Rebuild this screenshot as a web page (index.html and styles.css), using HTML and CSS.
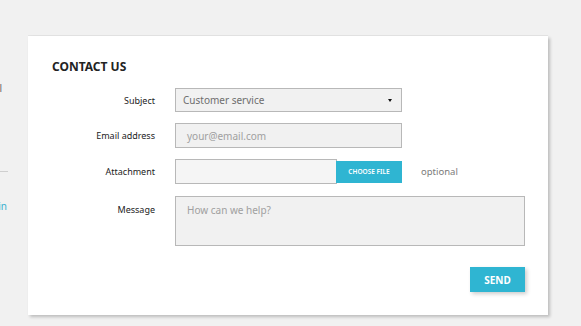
FILE: index.html
```html
<!DOCTYPE html>
<html>
<head>
<meta charset="utf-8">
<link rel="stylesheet" href="styles.css">
</head>
<body>
<div class="page">
  <aside class="sidebar">
    <div class="side-text">Terms and conditions of use, general</div>
    <div class="side-rule"></div>
    <div class="side-link">Sign in</div>
  </aside>
  <section class="card">
    <h3 class="title">CONTACT US</h3>
    <div class="row">
      <label class="label">Subject</label>
      <div class="select field"><span>Customer service</span><span class="caret"></span></div>
    </div>
    <div class="row">
      <label class="label">Email address</label>
      <div class="field email"><span class="ph">your@email.com</span></div>
    </div>
    <div class="row">
      <label class="label">Attachment</label>
      <div class="file-group">
        <div class="file-box"></div>
        <div class="file-btn">CHOOSE FILE</div>
      </div>
      <span class="optional">optional</span>
    </div>
    <div class="row row-msg">
      <label class="label label-top">Message</label>
      <div class="field textarea"><span class="ph">How can we help?</span></div>
    </div>
    <div class="actions">
      <button class="send">SEND</button>
    </div>
  </section>
</div>
</body>
</html>
```
FILE: styles.css
```css
html, body {
  margin: 0;
  padding: 0;
  background: #f1f1f1;
  font-family: "Noto Sans", "Open Sans", sans-serif;
}
.page {
  display: flex;
  align-items: flex-start;
  height: 326px;
  overflow: hidden;
}
.sidebar {
  width: 8px;
  flex: none;
  overflow: hidden;
  margin-right: 20px;
  display: flex;
  flex-direction: column;
  align-items: flex-end;
}
.side-text, .side-link {
  white-space: nowrap;
  font-size: 10px;
  line-height: 13px;
  flex: none;
}
.side-text {
  color: #666;
  margin-top: 82px;
  padding-right: 6px;
}
.side-rule {
  height: 1px;
  background: #cfcfcf;
  margin-top: 76px;
  width: 8px;
  flex: none;
}
.side-link {
  color: #3ab0cf;
  margin-top: 28px;
  padding-right: 1px;
}
.card {
  margin-top: 36px;
  width: 520px;
  height: 279px;
  flex: none;
  background: #fff;
  box-shadow: 2px 2px 3px 0 rgba(0,0,0,0.22), 0 -1px 0 rgba(0,0,0,0.05);
  box-sizing: border-box;
  padding-top: 22px;
}
.title {
  margin: 0 0 12px 24px;
  font-size: 12px;
  line-height: 18px;
  font-weight: 700;
  color: #232323;
}
.row {
  display: flex;
  align-items: center;
  margin-bottom: 11px;
  height: 25px;
}
.row:first-of-type { height: 24px; }
.label {
  width: 147px;
  flex: none;
  text-align: right;
  padding-right: 20px;
  box-sizing: border-box;
  font-size: 9px;
  color: #232323;
}
.field {
  box-sizing: border-box;
  border: 1px solid #b8b8b8;
  background: #f1f1f1;
  font-size: 10px;
  color: #7a7a7a;
  padding-left: 7px;
  display: flex;
  align-items: center;
}
.select {
  width: 227px;
  height: 24px;
  justify-content: space-between;
  padding-right: 9px;
  color: #6e6e6e;
}
.caret {
  width: 0;
  height: 0;
  border-left: 2.5px solid transparent;
  border-right: 2.5px solid transparent;
  border-top: 3px solid #111;
}
.email {
  width: 227px;
  height: 25px;
  padding-left: 11px;
}
.ph { color: #a0a0a0; }
.file-group {
  display: flex;
  align-items: center;
  width: 227px;
  height: 25px;
}
.file-box {
  width: 162px;
  height: 25px;
  box-sizing: border-box;
  border: 1px solid #b8b8b8;
  background: #f5f5f5;
}
.file-btn {
  width: 66px;
  height: 22px;
  margin-left: -1px;
  background: #2fb5d2;
  color: #fff;
  font-size: 6.5px;
  font-weight: 600;
  display: flex;
  align-items: center;
  justify-content: center;
}
.optional {
  margin-left: 19px;
  font-size: 9.5px;
  color: #7a7a7a;
}
.row-msg {
  height: 50px;
  align-items: flex-start;
  margin-top: 12px;
}
.label-top { padding-top: 7px; }
.textarea {
  width: 350px;
  height: 50px;
  align-items: flex-start;
  padding-left: 11px;
  padding-top: 6px;
}
.actions {
  display: flex;
  justify-content: flex-end;
  width: 497px;
  margin-top: 21px;
}
.send {
  width: 55px;
  height: 25px;
  border: 0;
  background: #2fb5d2;
  color: #fff;
  font-family: "Noto Sans", "Open Sans", sans-serif;
  font-weight: 700;
  font-size: 10px;
  padding: 0;
  box-shadow: 2px 2px 4px 0 rgba(0,0,0,0.2);
}
```
